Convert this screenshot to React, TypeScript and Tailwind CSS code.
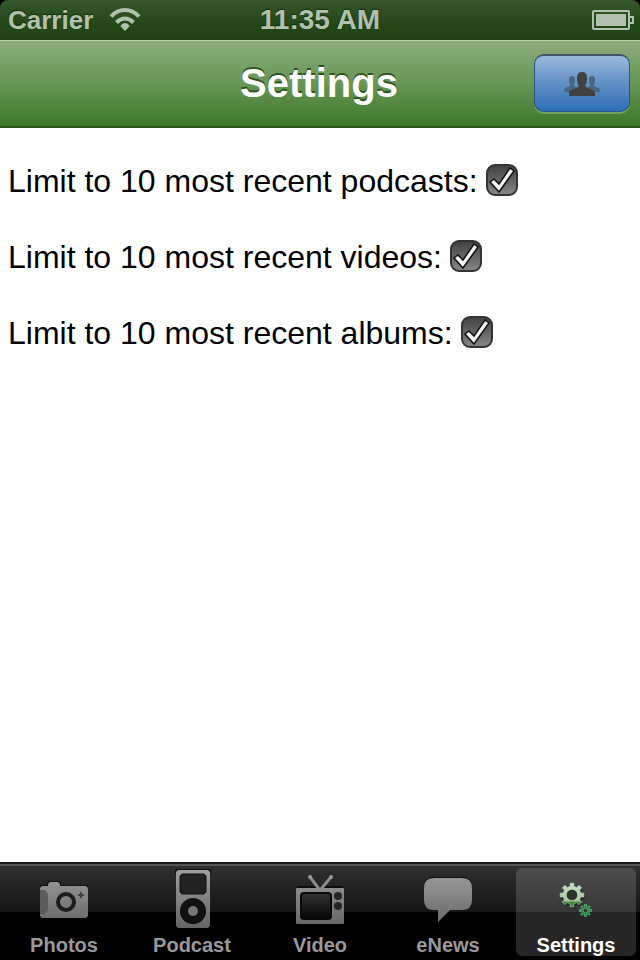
import React, { useState } from "react";

function gearPath(cx: number, cy: number, outer: number, inner: number, hole: number, teeth: number) {
  const points: string[] = [];
  const step = (Math.PI * 2) / teeth;
  for (let i = 0; i < teeth; i++) {
    const a = i * step - Math.PI / 2;
    const corners: [number, number][] = [
      [-0.27, inner],
      [-0.2, outer],
      [0.2, outer],
      [0.27, inner],
    ];
    for (const [offset, r] of corners) {
      const t = a + offset * step;
      points.push(`${(cx + r * Math.cos(t)).toFixed(2)},${(cy + r * Math.sin(t)).toFixed(2)}`);
    }
  }
  return `M${points.join("L")}Z M${cx - hole},${cy}a${hole},${hole} 0 1 0 ${hole * 2},0a${hole},${hole} 0 1 0 ${-hole * 2},0Z`;
}

function GreyGradient({ id }: { id: string }) {
  return (
    <defs>
      <linearGradient id={id} x1="0" y1="0" x2="0" y2="60" gradientUnits="userSpaceOnUse">
        <stop offset="0" stopColor="#a0a0a0" />
        <stop offset="1" stopColor="#646464" />
      </linearGradient>
    </defs>
  );
}

function CameraIcon() {
  return (
    <svg viewBox="0 0 60 60" className="size-15" aria-hidden="true">
      <GreyGradient id="camera" />
      <path d="M7 17h6v-2l2-2h10l2 2v2h26l2 2H6z" fill="#101010" />
      <path d="M8 18h6v-2l2-2h8l2 2v2h26l2 2v28l-2 2H8l-2-2V20z" fill="url(#camera)" />
      <path d="M6 22h5l3 4v16l-3 4H6z" fill="#5c5c5c" />
      <circle cx="32" cy="34" r="8" fill="none" stroke="#1d1d1d" strokeWidth="4" />
      <path d="M47 24v6M44 27h6" stroke="#404040" strokeWidth="2" />
    </svg>
  );
}

function PlayerIcon() {
  return (
    <svg viewBox="0 0 60 60" className="size-15" aria-hidden="true">
      <GreyGradient id="player" />
      <rect x="13" y="1" width="36" height="6" rx="2" fill="#101010" />
      <path
        fillRule="evenodd"
        fill="url(#player)"
        d="M16 2h30l2 2v54l-2 2H16l-2-2V4z M20 6l-2 2v16l2 2h22l2-2V8l-2-2z M18 43a13 13 0 1 0 26 0a13 13 0 1 0-26 0z"
      />
      <path d="M20 6h22l2 2v16l-2 2H20l-2-2V8z" fill="#222" stroke="#111" strokeWidth="1" />
      <circle cx="31" cy="43" r="12.5" fill="#111" />
      <circle cx="31" cy="43" r="5" fill="#777" />
    </svg>
  );
}

function TelevisionIcon() {
  return (
    <svg viewBox="0 0 60 60" className="size-15" aria-hidden="true">
      <defs>
        <linearGradient id="screen" x1="0" y1="0" x2="0" y2="1">
          <stop offset="0" stopColor="#343434" />
          <stop offset="1" stopColor="#050505" />
        </linearGradient>
      </defs>
      <GreyGradient id="television" />
      <path d="M7 19h46" stroke="#0c0c0c" strokeWidth="2" />
      <path d="M20 9l9 12h2l10-12" fill="none" stroke="#8b8b8b" strokeWidth="3" />
      <circle cx="20" cy="9" r="2" fill="#999" />
      <circle cx="41" cy="9" r="2" fill="#999" />
      <rect x="6" y="20" width="48" height="36" rx="1" fill="url(#television)" />
      <rect x="11" y="25" width="30" height="26" rx="3" fill="url(#screen)" stroke="#080808" strokeWidth="2" />
      <circle cx="48" cy="28" r="4" fill="#252525" />
      <circle cx="48" cy="38" r="4" fill="#252525" />
    </svg>
  );
}

function BubbleIcon() {
  const shape = "M16 10h28q10 0 10 10v12q0 10-10 10h-12L20 54V42h-4Q6 42 6 32V20q0-10 10-10z";
  return (
    <svg viewBox="0 0 60 60" className="size-15" aria-hidden="true">
      <GreyGradient id="bubble" />
      <path d={shape} fill="#111" transform="translate(0 -1)" />
      <path d={shape} fill="url(#bubble)" />
    </svg>
  );
}

function GearsIcon() {
  return (
    <svg viewBox="0 0 60 60" className="size-15" aria-hidden="true">
      <defs>
        <linearGradient id="gear" x1="0" y1="0" x2="0" y2="1">
          <stop offset="0" stopColor="#d3dfcd" />
          <stop offset="0.74" stopColor="#a9c59f" />
          <stop offset="0.82" stopColor="#3b8234" />
          <stop offset="1" stopColor="#47913e" />
        </linearGradient>
      </defs>
      <path d={gearPath(27, 29, 12, 9.5, 5, 8)} fill="#1a1a1a" opacity="0.6" />
      <path d={gearPath(26, 27, 12, 9, 5.5, 8)} fillRule="evenodd" fill="url(#gear)" stroke="#a4d5ac" strokeWidth="0.6" />
      <circle cx="26" cy="27" r="5" fill="#303030" />
      <path d={gearPath(39.5, 42.5, 6, 4, 2.5, 8)} fillRule="evenodd" fill="#24713a" stroke="#55bf79" strokeWidth="0.9" />
    </svg>
  );
}

function WifiIcon() {
  return (
    <svg viewBox="0 0 32 24" className="h-6 w-8" aria-label="Wi-Fi" role="img">
      <g fill="none" stroke="#b2c0ae" strokeWidth="4">
        <path d="M2 8.500Q8 2 16 2t14 6.500" />
        <path d="M7.500 14.500Q11.500 10.500 16 10.500t8.500 4" />
      </g>
      <path d="M11.300 18q2-3 4.700-3t4.700 3L16 23z" fill="#b2c0ae" />
    </svg>
  );
}

function BatteryIcon() {
  return (
    <svg viewBox="0 0 42 20" className="h-5 w-[42px]" aria-label="Battery full" role="img">
      <rect x="1" y="1" width="36" height="18" rx="1" fill="none" stroke="#b2c0ae" strokeWidth="2" />
      <rect x="4" y="4" width="30" height="12" fill="#b2c0ae" />
      <path d="M38 7h3v6h-3" fill="none" stroke="#b2c0ae" strokeWidth="2" />
    </svg>
  );
}

function PeopleIcon() {
  const side =
    "M0 20v-2q0-2 5-3.500 1.500-.5 1-2Q5 11 5 7.500 5 4 8 4t3 3.500q0 3.500-1 5-.5 1.500 1 2 5 1.500 5 3.500v2z";
  return (
    <svg viewBox="0 0 36 24" className="h-6 w-9" aria-hidden="true">
      <path d={side} fill="#4b6683" />
      <path d={side} fill="#4b6683" transform="translate(20 0)" />
      <path
        d="M5 24v-3.500q0-2 6-4 3.500-1 3.500-2.500 0-1-.5-2-1-1.500-1-6.500 0-5.500 5-5.500t5 5.500q0 5-1 6.500-.5 1-.5 2 0 1.500 3.500 2.500 6 2 6 4V24z"
        fill="#414141"
      />
    </svg>
  );
}

const settings = [
  { id: "podcasts", label: "Limit to 10 most recent podcasts:" },
  { id: "videos", label: "Limit to 10 most recent videos:" },
  { id: "albums", label: "Limit to 10 most recent albums:" },
];

const tabs = [
  { name: "Photos", Icon: CameraIcon },
  { name: "Podcast", Icon: PlayerIcon },
  { name: "Video", Icon: TelevisionIcon },
  { name: "eNews", Icon: BubbleIcon },
  { name: "Settings", Icon: GearsIcon },
];

function SettingRow({ id, label }: { id: string; label: string }) {
  const [checked, setChecked] = useState(true);
  return (
    <div className="flex h-8 items-center gap-2">
      <label htmlFor={id} className="pt-0.5 text-[32px] leading-9">
        {label}
      </label>
      <span className="relative size-8 shrink-0">
        <input
          id={id}
          type="checkbox"
          checked={checked}
          onChange={(event) => setChecked(event.target.checked)}
          className="block size-8 appearance-none rounded-[9px] border-2 border-[#333] bg-linear-to-b from-[#444] to-[#858585]"
        />
        {checked && (
          <svg viewBox="0 0 32 32" className="pointer-events-none absolute inset-0 size-8" aria-hidden="true">
            <path
              d="M4 18l4-3 5 5L24 4l4 3-15 21z"
              fill="#f3f3f3"
              stroke="#111"
              strokeWidth="1.5"
            />
          </svg>
        )}
      </span>
    </div>
  );
}

export default function App() {
  const [active, setActive] = useState("Settings");
  return (
    <div className="flex min-h-screen flex-col bg-white font-['Liberation_Sans',Arial,sans-serif] text-black">
      <div className="bg-black">
        <div className="grid h-10 grid-cols-[1fr_auto_1fr] items-center rounded-t-lg bg-linear-to-b from-[#37572c] via-[#24471a] via-60% to-[#214213] px-1.5 text-[28px] leading-10 font-bold text-[#b2c0ae] text-shadow-[0_-1px_1px_#122b0a]">
          <div className="flex items-center gap-4 pl-0.5 text-[26px]">
            <span>Carrier</span>
            <WifiIcon />
          </div>
          <span>11:35 AM</span>
          <div className="flex justify-end">
            <BatteryIcon />
          </div>
        </div>
      </div>

      <header className="grid h-22 grid-cols-[1fr_auto_1fr] items-start border-t border-b-2 border-t-[#b4d2a6] border-b-[#2b571c] bg-linear-to-b from-[#8bad7d] via-[#679656] via-50% to-[#3c7826] pt-[13px] pr-2.5 pl-2">
        <h1 className="col-start-2 text-[40px] leading-[58px] font-bold text-white text-shadow-[0_-2px_0_#2f5221]">
          Settings
        </h1>
        <button
          type="button"
          aria-label="Accounts"
          className="flex h-[58px] w-24 items-center justify-center justify-self-end rounded-[10px] border border-t-2 border-[#2b528a] border-t-[#41536a] bg-linear-to-b from-[#9cb8dc] via-[#608fc6] via-50% to-[#2e6eb6] shadow-[0_2px_0_#72a45f]"
        >
          <PeopleIcon />
        </button>
      </header>

      <main className="flex flex-1 flex-col gap-11 px-2 pt-9">
        {settings.map((setting) => (
          <SettingRow key={setting.id} {...setting} />
        ))}
      </main>

      <nav className="grid h-[98px] grid-cols-5 border-t-2 border-[#181818] bg-linear-to-b from-[#555] from-[2px] via-[#303030] via-[2px] to-[#151515] to-[48px] bg-size-[100%_48px] bg-no-repeat bg-black">
        {tabs.map(({ name, Icon }) => (
          <button
            key={name}
            type="button"
            aria-current={active === name ? "page" : undefined}
            onClick={() => setActive(name)}
            className={
              active === name
                ? "m-1 flex flex-col items-center rounded-md bg-white/15 text-white"
                : "m-1 flex flex-col items-center rounded-md text-[#999]"
            }
          >
            <Icon />
            <span className="pt-1.5 text-[20px] leading-[22px] font-bold">{name}</span>
          </button>
        ))}
      </nav>
    </div>
  );
}
